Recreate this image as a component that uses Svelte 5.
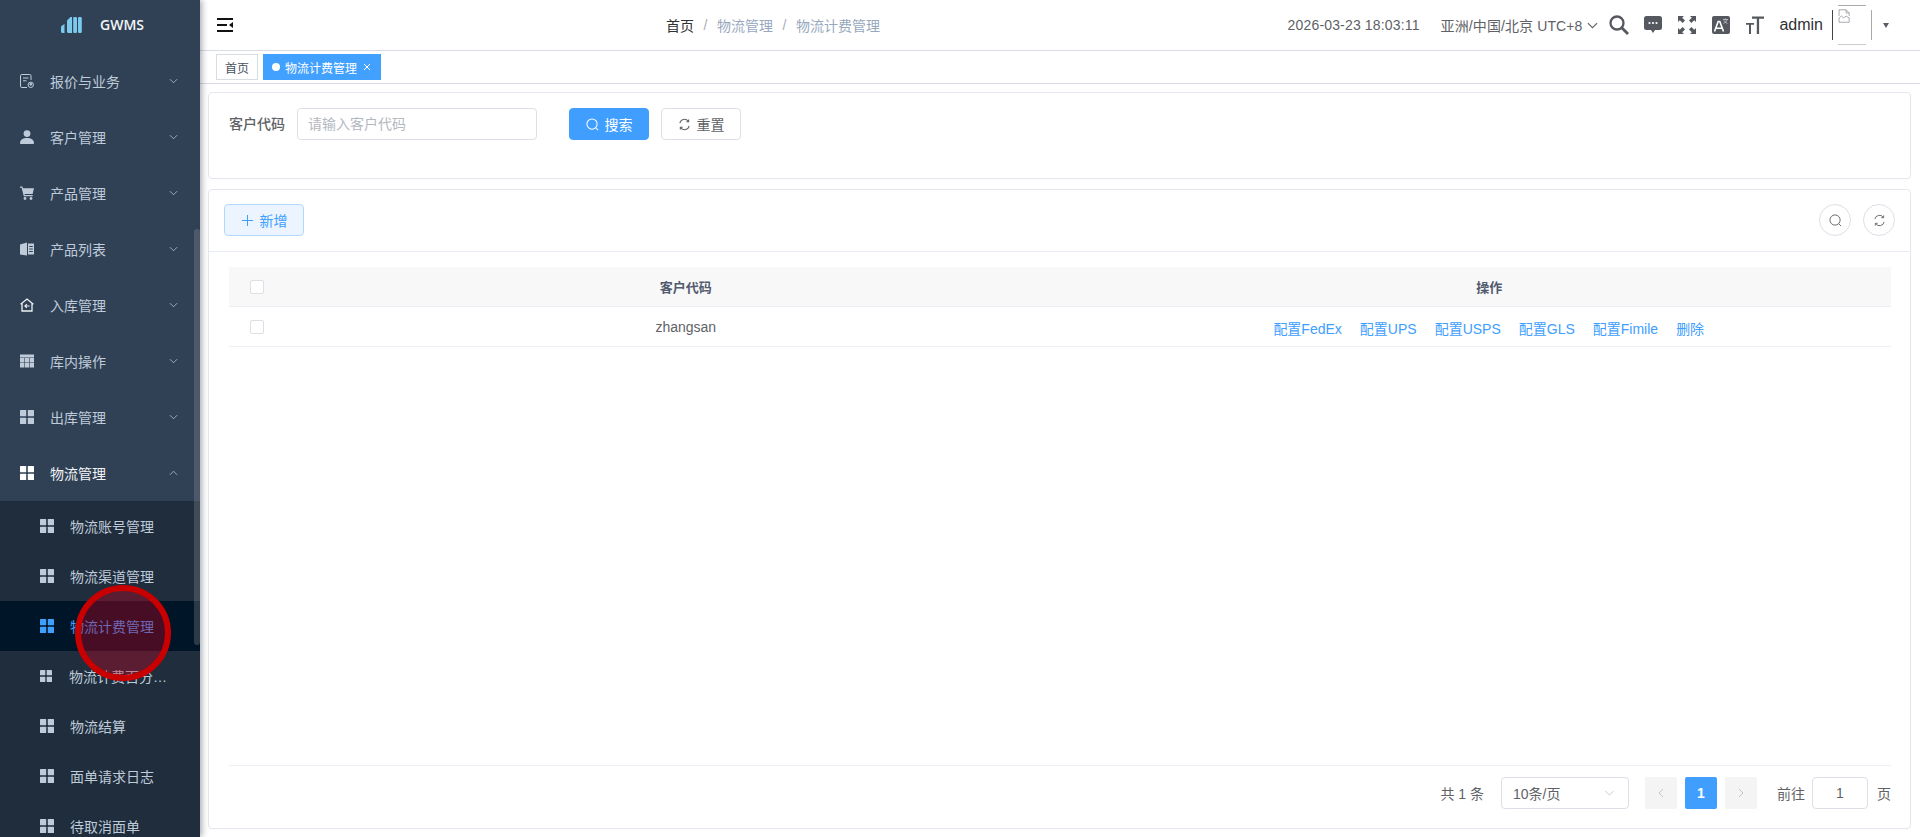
<script>
  const menus = [
    { label: '报价与业务', icon: 'doc' },
    { label: '客户管理', icon: 'user' },
    { label: '产品管理', icon: 'cart' },
    { label: '产品列表', icon: 'book' },
    { label: '入库管理', icon: 'home' },
    { label: '库内操作', icon: 'table' },
    { label: '出库管理', icon: 'grid' }
  ];
  const subs = [
    { label: '物流账号管理' },
    { label: '物流渠道管理' },
    { label: '物流计费管理', active: true },
    { label: '物流计费百分比设置', tight: true },
    { label: '物流结算' },
    { label: '面单请求日志' },
    { label: '待取消面单' }
  ];
  const actions = ['配置FedEx', '配置UPS', '配置USPS', '配置GLS', '配置Fimile', '删除'];
</script>

{#snippet grid()}
  <svg class="ic" viewBox="0 0 14 14" fill="currentColor"><rect width="6.2" height="6.2" rx=".5"/><rect x="7.8" width="6.2" height="6.2" rx=".5"/><rect y="7.8" width="6.2" height="6.2" rx=".5"/><rect x="7.8" y="7.8" width="6.2" height="6.2" rx=".5"/></svg>
{/snippet}

{#snippet menuIcon(name)}
  {#if name === 'doc'}
    <svg class="ic" viewBox="0 0 14 14" fill="none" stroke="currentColor" stroke-width="1"><path d="M11 6V1.8a1.3 1.3 0 0 0-1.3-1.3H1.8A1.3 1.3 0 0 0 .5 1.8v10.4a1.3 1.3 0 0 0 1.3 1.3H7M3 4h5.5M3 6.8h3.5"/><circle cx="10.8" cy="10.8" r="2.7"/><circle cx="10.8" cy="10.2" r="1" fill="currentColor"/></svg>
  {:else if name === 'user'}
    <svg class="ic" viewBox="0 0 14 14" fill="currentColor"><circle cx="7" cy="3.6" r="3.4"/><path d="M0 13.2C0 9.8 3 8 7 8s7 1.8 7 5.2c0 .5-.3.8-.8.8H.8c-.5 0-.8-.3-.8-.8z"/></svg>
  {:else if name === 'cart'}
    <svg class="ic" viewBox="0 0 14 14" fill="currentColor"><path d="M0 .5h2.4l.5 1.7H14l-1.4 5.7H4.5l.3 1.2h7.900v1.2H3.800L1.600 1.700H0z"/><circle cx="5" cy="12.500" r="1.400"/><circle cx="11" cy="12.500" r="1.400"/></svg>
  {:else if name === 'book'}
    <svg class="ic" viewBox="0 0 14 14" fill="currentColor"><path d="M0 2.400 7 .4v13.200L0 12.400z"/><path d="M8 1.600h6v10.800H8zM9.200 4v1h3.600V4zm0 2.500v1h3.600v-1zm0 2.500v1h3.600V9z" fill-rule="evenodd"/></svg>
  {:else if name === 'home'}
    <svg class="ic" viewBox="0 0 14 14" fill="none" stroke="#eef1f5" stroke-width="1.300"><path d="M.6 6.200 7 1l6.400 5.200M2 5.400v7.600h10V5.400"/><path d="M9.600 8H5.200M6.800 6.200 5 8l1.800 1.800" stroke-width="1.200"/></svg>
  {:else if name === 'table'}
    <svg class="ic" viewBox="0 0 14 14" fill="currentColor"><path d="M0 .5h14v3H0zM0 4.100h4.300v4.300H0zM4.900 4.100h4.200v4.300H4.900zM9.700 4.100H14v4.300H9.700zM0 9h4.300v4.500H0zM4.900 9h4.200v4.500H4.900zM9.700 9H14v4.500H9.700z"/></svg>
  {:else}
    {@render grid()}
  {/if}
{/snippet}

{#snippet chevron(up)}
  <svg class="chev" class:up viewBox="0 0 10 6" fill="none" stroke="currentColor" stroke-width="1"><path d="M1 1l4 4 4-4"/></svg>
{/snippet}

<div class="page">
  <aside class="side">
    <div class="brand">
      <svg class="logo" viewBox="0 0 22 16" fill="#7cc9ee"><path d="M1 10c0-.6.4-1 .8-1.300L4.500 7v9H2.300C1.500 16 1 15.500 1 14.800z"/><path d="M7 3.500 10.500 0h1.500v16H8.200C7.500 16 7 15.500 7 14.800z" /><rect x="13.200" y="0" width="3.800" height="16" rx="1.300"/><rect x="18" y="0" width="3.800" height="16" rx="1.300"/></svg>
      <span class="brand-name">GWMS</span>
    </div>
    <nav class="menu">
      {#each menus as m}
        <div class="item">
          {@render menuIcon(m.icon)}
          <span>{m.label}</span>
          {@render chevron(false)}
        </div>
      {/each}
      <div class="item open">
        <span class="white">{@render grid()}</span>
        <span>物流管理</span>
        {@render chevron(true)}
      </div>
      <div class="submenu">
        {#each subs as s}
          <div class="sub" class:active={s.active} class:tight={s.tight}>
            {@render grid()}
            <span class="sub-label">{s.label}</span>
          </div>
        {/each}
      </div>
    </nav>
    <div class="thumb"></div>
  </aside>

  <main class="main">
    <header class="top">
      <svg class="burger" viewBox="0 0 16 14" fill="#111"><rect width="16" height="2"/><rect y="6" width="10" height="2"/><rect y="12" width="16" height="2"/><path d="M16 4v6l-4-3z"/></svg>
      <div class="crumb">
        <span class="now">首页</span><i>/</i><span>物流管理</span><i>/</i><span>物流计费管理</span>
      </div>
      <div class="tools">
        <span class="date">2026-03-23 18:03:11</span>
        <span class="tz">亚洲/中国/北京 UTC+8</span>
        <svg class="tz-chev" viewBox="0 0 10 6" fill="none" stroke="#606266"><path d="M.8 .8 5 5 9.200 .8"/></svg>
        <svg class="tool t-search" viewBox="0 0 20 20" fill="none" stroke="#55585e" stroke-width="2.300"><circle cx="8" cy="8" r="6.500"/><path d="m13 13 6 6" stroke-width="2.800"/></svg>
        <svg class="tool t-msg" viewBox="0 0 18 18"><path d="M2.500 0h13A2.500 2.500 0 0 1 18 2.500v9a2.500 2.500 0 0 1-2.500 2.500H11l-2 3-2-3H2.500A2.500 2.500 0 0 1 0 11.500v-9A2.500 2.500 0 0 1 2.500 0z" fill="#55585e"/><circle cx="5.500" cy="7" r="1.100" fill="#fff"/><circle cx="9" cy="7" r="1.100" fill="#fff"/><circle cx="12.500" cy="7" r="1.100" fill="#fff"/></svg>
        <svg class="tool t-full" viewBox="0 0 18 18" fill="#55585e"><path d="M0 0h6L4.200 1.800 7 4.600 4.600 7 1.800 4.200 0 6zM18 0v6l-1.800-1.800L13.400 7 11 4.600l2.800-2.800L12 0zM0 18v-6l1.800 1.800L4.600 11 7 13.400l-2.800 2.800L6 18zM18 18h-6l1.800-1.800-2.800-2.800 2.400-2.400 2.800 2.800L18 12z"/></svg>
        <svg class="tool t-lang" viewBox="0 0 18 18"><rect width="18" height="18" rx="2" fill="#55585e"/><path d="m2.500 15.500 3.700-10h1.600l3.700 10M4.300 12.300h5.400" stroke="#fff" stroke-width="1.600" fill="none"/><path d="M11 3.500h5M13.500 2.500v1M15 3.500c-.5 2-1.700 3-3.500 3.800M12 4.500c.5 1.300 2 2.300 3.500 2.800" stroke="#c9ccd1" stroke-width=".8" fill="none"/></svg>
        <svg class="tool t-size" viewBox="0 0 18 18" fill="#55585e"><path d="M6 .5h12v2.200h-4.900V18h-2.300V2.700H6z"/><path d="M0 7h8v1.800H5V18H3V8.800H0z"/></svg>
        <span class="admin">admin</span>
        <div class="avatar">
          <svg viewBox="0 0 16 18" fill="none" stroke="#8f9399" stroke-width="1"><path d="M1 9V1h9l4 4v4M10 1v4h4M1 11.500l3-2.500 3 2.500 3-2.500 4 2.500v5.500H1z"/></svg>
        </div>
        <span class="caret"></span>
      </div>
    </header>

    <div class="tags">
      <span class="tag">首页</span>
      <span class="tag on"><b class="dot"></b>物流计费管理<svg viewBox="0 0 10 10" stroke="#fff" stroke-width="1"><path d="m2 2 6 6m0-6-6 6"/></svg></span>
    </div>

    <section class="content">
      <div class="card search">
        <span class="lbl">客户代码</span>
        <div class="input ph">请输入客户代码</div>
        <button class="btn primary">
          <svg viewBox="0 0 14 14" fill="none" stroke="#fff" stroke-width="1.100"><circle cx="6.500" cy="6.500" r="5.500"/><path d="m10.500 10.500 2.500 2.500"/></svg>
          搜索
        </button>
        <button class="btn reset">
          <svg viewBox="0 0 14 14" fill="none" stroke="#606266" stroke-width="1.100"><path d="M2 5.500A5 5 0 0 1 11 3.500M12 8.500A5 5 0 0 1 3 10.500M11.500 1.500v2.500H9M2.500 12.500V10H5"/></svg>
          重置
        </button>
      </div>

      <div class="card list">
        <div class="bar">
          <button class="btn add">
            <svg viewBox="0 0 14 14" stroke="#409eff" stroke-width="1.100"><path d="M7 1v12M1 7h12"/></svg>
            新增
          </button>
          <div class="circles">
            <span class="circle"><svg viewBox="0 0 14 14" fill="none" stroke="#606266" stroke-width="1"><circle cx="6.500" cy="6.500" r="5.500"/><path d="m10.500 10.500 2.500 2.500"/></svg></span>
            <span class="circle"><svg viewBox="0 0 14 14" fill="none" stroke="#606266" stroke-width="1"><path d="M2 5.500A5 5 0 0 1 11 3.500M12 8.500A5 5 0 0 1 3 10.500M11.500 1.500v2.500H9M2.500 12.500V10H5"/></svg></span>
          </div>
        </div>
        <div class="body">
          <div class="table">
            <div class="row head">
              <span class="cell"><b class="check"></b></span>
              <span class="cell">客户代码</span>
              <span class="cell">操作</span>
            </div>
            <div class="row data">
              <span class="cell"><b class="check"></b></span>
              <span class="cell">zhangsan</span>
              <span class="cell ops">
                {#each actions as a}<a href="#top">{a}</a>{/each}
              </span>
            </div>
          </div>
          <footer class="pager">
            <span class="total">共 1 条</span>
            <div class="select"><span>10条/页</span><svg viewBox="0 0 12 7" fill="none" stroke="#c0c4cc"><path d="m1 1 5 5 5-5"/></svg></div>
            <span class="pg"><svg viewBox="0 0 6 10" fill="none" stroke="#c0c4cc"><path d="M5 1 1 5l4 4"/></svg></span>
            <span class="pg cur">1</span>
            <span class="pg"><svg viewBox="0 0 6 10" fill="none" stroke="#c0c4cc"><path d="m1 1 4 4-4 4"/></svg></span>
            <span class="goto">前往</span>
            <div class="jump">1</div>
            <span class="unit">页</span>
          </footer>
        </div>
      </div>
    </section>
  </main>

  <div class="ring"></div>
</div>

<style>
  :global(body) {
    margin: 0;
    background: #fff;
    font-family: "Liberation Sans", "Noto Sans CJK SC", sans-serif;
    font-size: 14px;
    color: #606266;
  }
  .page { display: flex; height: 837px; overflow: hidden; position: relative; }

  /* Sidebar */
  .side {
    width: 200px; flex: none; position: relative; z-index: 2; overflow: hidden;
    background: #304156; color: #bfcbd9;
    box-shadow: 2px 0 6px rgba(0, 21, 41, .35);
  }
  .brand { height: 50px; display: flex; align-items: center; padding: 0 0 0 60px; box-sizing: border-box; }
  .logo { width: 22px; height: 16px; flex: none; }
  .brand-name { margin-left: 18px; font-family: "Open Sans", "Liberation Sans", sans-serif; font-weight: 600; color: #f2f5f8; margin-top: -1px; }
  .menu { margin-top: 3px; }
  .item { height: 56px; display: flex; align-items: center; padding-left: 20px; gap: 16px; }
  .item.open { color: #f4f4f5; }
  .white { display: flex; color: #fff; }
  .ic { width: 14px; height: 14px; flex: none; }
  .chev { width: 9px; height: 6px; margin-left: auto; margin-right: 22px; color: #a9b5c3; }
  .chev.up { transform: rotate(180deg); }
  .submenu { background: #1f2d3d; }
  .sub { height: 50px; display: flex; align-items: center; padding-left: 40px; gap: 16px; }
  .sub.active { background: #001528; color: #409eff; }
  .sub.tight { gap: 17px; }
  .sub.tight .ic { width: 12px; height: 12px; }
  .sub-label { max-width: 98px; overflow: hidden; white-space: nowrap; text-overflow: ellipsis; }
  .thumb {
    position: absolute; right: 0; top: 229px; width: 6px; height: 416px;
    border-radius: 3px; background: rgba(144, 147, 153, .3);
  }

  /* Main */
  .main { flex: 1; min-width: 0; display: flex; flex-direction: column; }
  .top {
    height: 50px; flex: none; box-sizing: content-box; display: flex; align-items: center;
    border-bottom: 1px solid #d8dce5; padding-left: 17px;
  }
  .burger { width: 16px; height: 14px; flex: none; }
  .crumb { margin-left: 433px; display: flex; align-items: center; color: #97a8be; white-space: nowrap; }
  .crumb .now { color: #303133; }
  .crumb i { font-style: normal; margin: 0 9.500px; color: #a8adb5; width: 4px; text-align: center; }
  .tools { margin-left: auto; display: flex; align-items: center; height: 100%; white-space: nowrap; padding-right: 31px; }
  .date { letter-spacing: .16px; }
  .tz { margin-left: 21px; letter-spacing: .1px; }
  .tz-chev { width: 11px; height: 7px; margin-left: 5px; }
  .tool { flex: none; }
  .t-search { width: 20px; height: 20px; margin-left: 11px; }
  .t-msg { width: 18px; height: 18px; margin-left: 15px; }
  .t-full { width: 18px; height: 18px; margin-left: 16px; }
  .t-lang { width: 18px; height: 18px; margin-left: 16px; }
  .t-size { width: 18px; height: 18px; margin-left: 16px; }
  .admin { font-size: 16px; color: #303133; margin-left: 15px; }
  .avatar {
    width: 40px; height: 40px; margin-left: 9px; margin-top: -1px; padding: 4px 0 0 6px; box-sizing: border-box;
    background:
      linear-gradient(#444, #444) left center / 1px 30px no-repeat,
      linear-gradient(#aaa, #aaa) right center / 1px 30px no-repeat,
      linear-gradient(#aaa, #aaa) center top / 28px 1px no-repeat,
      linear-gradient(#ccc, #ccc) center bottom / 28px 1px no-repeat;
  }
  .avatar svg { width: 13px; height: 14px; display: block; }
  .caret { margin-left: 11px; border-top: 5px solid #5a5e66; border-left: 3.500px solid transparent; border-right: 3.500px solid transparent; }

  .tags {
    height: 32px; flex: none; display: flex; align-items: center; gap: 5px;
    padding-left: 16px; border-bottom: 1px solid #d8dce5; font-size: 12px;
  }
  .tag {
    height: 26px; box-sizing: border-box; display: flex; align-items: center;
    border: 1px solid #d8dce5; padding: 0 8px; color: #495060; background: #fff;
  }
  .tag.on { background: #42a0ff; color: #fff; border-color: #42a0ff; }
  .dot { width: 8px; height: 8px; border-radius: 50%; background: #fff; margin-right: 5px; }
  .tag svg { width: 10px; height: 10px; margin-left: 5px; }

  .content {
    flex: 1; min-height: 0; display: flex; flex-direction: column; gap: 10px;
    padding: 8px 9px 8px 8px;
  }
  .card { border: 1px solid #e4e7ed; border-radius: 4px; background: #fff; box-sizing: border-box; box-shadow: 0 1px 2px rgba(0, 0, 0, .02); }
  .search { height: 87px; flex: none; display: flex; align-items: flex-start; padding: 15px 0 0 20px; }
  .lbl { line-height: 32px; font-weight: 500; color: #606266; width: 68px; flex: none; }
  .input {
    width: 240px; height: 32px; box-sizing: border-box; border: 1px solid #dcdfe6; border-radius: 4px;
    padding: 0 10px; line-height: 30px; color: #b4b8c0;
  }
  .btn {
    height: 32px; box-sizing: border-box; border-radius: 4px; border: 1px solid #dcdfe6; background: #fff;
    font: inherit; color: #606266; display: flex; align-items: center; justify-content: center; gap: 6px; padding: 0;
  }
  .btn svg { width: 13px; height: 13px; }
  .primary { width: 80px; margin-left: 32px; background: #409eff; border-color: #409eff; color: #fff; }
  .reset { width: 80px; margin-left: 12px; }

  .list { flex: 1; min-height: 0; display: flex; flex-direction: column; }
  .bar {
    height: 62px; flex: none; box-sizing: border-box; display: flex; align-items: flex-start;
    padding: 14px 15px 0 15px; border-bottom: 1px solid #e6ebf5;
  }
  .add { width: 80px; background: #ecf5ff; border-color: #b3d8ff; color: #409eff; }
  .circles { margin-left: auto; display: flex; gap: 12px; }
  .circle {
    width: 32px; height: 32px; box-sizing: border-box; border: 1px solid #dcdfe6; border-radius: 50%;
    display: flex; align-items: center; justify-content: center;
  }
  .circle svg { width: 13px; height: 13px; }

  .body { flex: 1; min-height: 0; display: flex; flex-direction: column; padding: 15px 19px 0 20px; }
  .table { flex: 1; min-height: 0; }
  .row { display: grid; grid-template-columns: 55px 1fr 1fr; align-items: center; text-align: center; border-bottom: 1px solid #ebeef5; box-sizing: border-box; }
  .head { height: 40px; background: #f8f8f9; color: #515a6e; font-size: 13px; font-weight: 700; }
  .data { height: 40px; }
  .cell { display: flex; justify-content: center; align-items: center; }
  .check { width: 14px; height: 14px; box-sizing: border-box; border: 1px solid #dcdfe6; border-radius: 2px; background: #fff; }
  .ops { gap: 18px; padding-top: 2px; padding-right: 1px; }
  .ops a { color: #409eff; text-decoration: none; }

  .pager {
    height: 63px; flex: none; box-sizing: border-box; border-top: 1px solid #ebeef5;
    display: flex; align-items: center; justify-content: flex-end; padding-bottom: 9px;
  }
  .total { margin-right: 17px; }
  .select {
    width: 128px; height: 32px; box-sizing: border-box; border: 1px solid #dcdfe6; border-radius: 4px;
    display: flex; align-items: center; justify-content: space-between; padding: 0 13px 0 11px; margin-right: 16px;
  }
  .select svg { width: 11px; height: 6px; }
  .pg {
    width: 32px; height: 32px; background: #f4f4f5; display: flex; align-items: center; justify-content: center;
    border-radius: 2px; margin-right: 8px; color: #fff; font-weight: 700;
  }
  .pg svg { width: 6px; height: 10px; }
  .pg.cur { background: #409eff; }
  .goto { margin-left: 12px; margin-right: 7px; }
  .jump {
    width: 56px; height: 32px; box-sizing: border-box; border: 1px solid #dcdfe6; border-radius: 4px;
    display: flex; align-items: center; justify-content: center;
  }
  .unit { margin-left: 9px; }

  .ring {
    position: absolute; left: 75px; top: 585px; width: 96px; height: 96px; box-sizing: border-box;
    border: 6px solid #c80000; border-radius: 50%; background: rgba(200, 0, 30, .35); z-index: 5;
  }
</style>
